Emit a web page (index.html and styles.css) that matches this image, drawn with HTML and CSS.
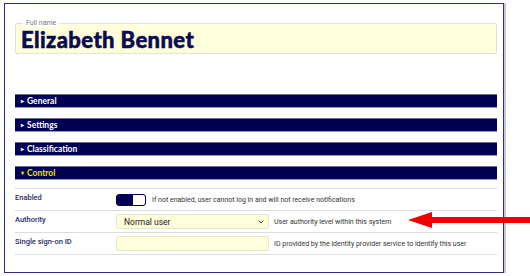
FILE: index.html
```html
<!DOCTYPE html>
<html lang="en">
<head>
    <meta charset="UTF-8">
    <title>User</title>
    <link rel="stylesheet" href="styles.css">
</head>
<body>
    <div class="frame">
        <fieldset class="name-box">
            <legend>Full name</legend>
            <div class="name">Elizabeth Bennet</div>
        </fieldset>

        <div class="sections">
            <div class="bar"><span class="caret">&#9656;</span>General</div>
            <div class="bar"><span class="caret">&#9656;</span>Settings</div>
            <div class="bar"><span class="caret">&#9656;</span>Classification</div>
            <div class="bar open"><span class="caret">&#9662;</span>Control</div>
        </div>

        <div class="rows">
            <div class="row">
                <div class="label">Enabled</div>
                <div class="field">
                    <span class="toggle"><span class="knob"></span></span>
                    <span class="hint">If not enabled, user cannot log in and will not receive notifications</span>
                </div>
            </div>
            <div class="row">
                <div class="label">Authority</div>
                <div class="field">
                    <div class="select">Normal user
                        <svg class="chev" width="6" height="4" viewBox="0 0 6 4"><path d="M0.6 0.6 L3 3 L5.4 0.6" fill="none" stroke="#333" stroke-width="1"/></svg>
                    </div>
                    <span class="hint">User authority level within this system</span>
                </div>
            </div>
            <div class="row">
                <div class="label">Single sign-on ID</div>
                <div class="field">
                    <div class="input"></div>
                    <span class="hint">ID provided by the identity provider service to identify this user</span>
                </div>
            </div>
        </div>
    </div>

    <svg class="arrow" width="122" height="18" viewBox="0 0 122 18">
        <polygon points="0,9 24,1 24,6 122,6 122,12 24,12 24,17" fill="#f00000"/>
    </svg>
</body>
</html>
```

FILE: styles.css
```css
* { box-sizing: border-box; }
body { margin: 0; background: #fff; font-family: Roboto, "Noto Sans", sans-serif; }
.frame { margin: 3px 0 0 4px; width: 500px; height: 270px; border: 1.5px solid #2e2e7e; box-shadow: 2px 0 0 #c8c8d8; padding: 16px 6px 0 10px; }
.name-box { margin: 0; padding: 0 5px; border: 1.5px solid #e2e2dc; border-radius: 2px; background: #ffffdc; min-width: 0; height: 34px; overflow: hidden; }
.name-box legend { font-size: 7px; line-height: 7px; color: #777; padding: 0 3px; margin-left: 2px; background: #fff; }
.name { font-family: Lato, sans-serif; font-weight: 900; font-size: 22px; line-height: 18px; padding-top: 4px; color: #0b0b50; letter-spacing: 0.4px; -webkit-text-stroke: 0.5px #0b0b50; }
.sections { margin-top: 40px; display: flex; flex-direction: column; gap: 10px; }
.bar { height: 14px; background: #000055; border-top: 1px solid #6a6a90; border-bottom: 1px solid #9a9ab0; border-radius: 1px; color: #fff; font-family: Lato, sans-serif; font-weight: 700; font-size: 8.5px; line-height: 12px; padding-left: 6px; display: flex; align-items: center; }
.bar .caret { font-size: 6px; margin-right: 3px; }
.bar.open { color: #e6e600; }
.rows { margin-top: 8px; border-top: 1px solid #ddd; }
.row { display: grid; grid-template-columns: 101px 1fr; height: 22px; border-bottom: 1px solid #ddd; align-items: center; }
.label { font-size: 7.5px; color: #2a2a6a; font-weight: 500; padding-bottom: 4px; }
.field { display: flex; align-items: center; gap: 5px; }
.toggle { width: 30px; height: 12px; border: 1.2px solid #000055; border-radius: 3px; background: #000055; display: flex; justify-content: flex-end; margin-right: 1px; }
.knob { width: 12px; height: 100%; background: #fff; border-radius: 0 2px 2px 0; }
.hint { font-size: 7px; color: #333; }
.select, .input { width: 153px; height: 15px; background: #ffffdc; border: 1px solid #e6e6c8; border-radius: 2px; }
.select { display: flex; align-items: center; justify-content: space-between; padding: 0 4px 0 7px; font-size: 8.5px; color: #222; }
.arrow { position: absolute; left: 408px; top: 211px; }
```
